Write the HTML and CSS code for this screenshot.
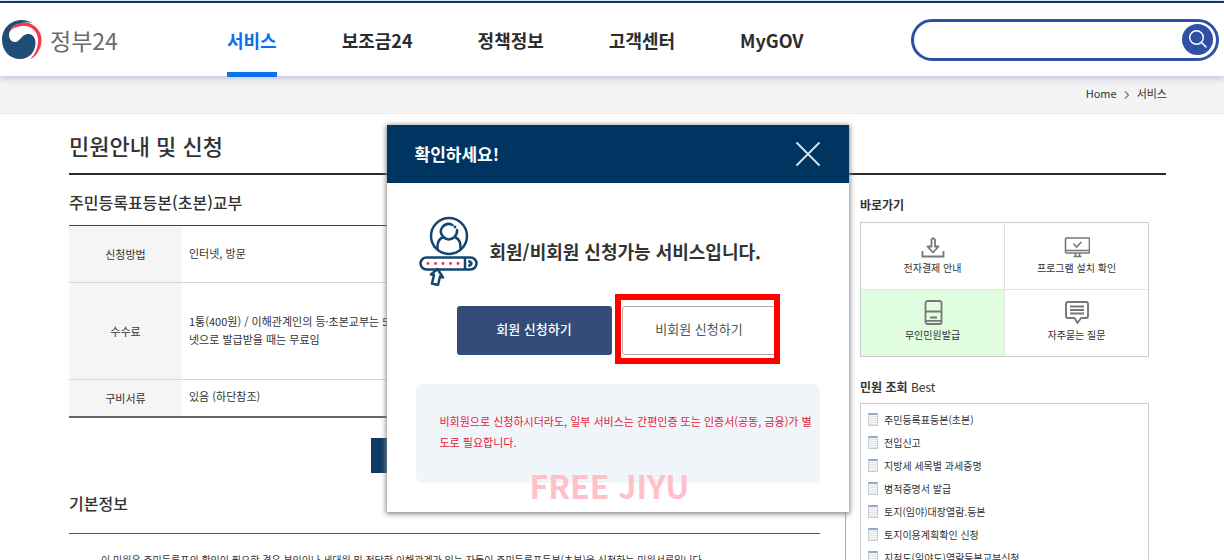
FILE: index.html
```html
<!DOCTYPE html>
<html lang="ko">
<head>
<meta charset="utf-8">
<title>정부24</title>
<meta name="viewport" content="width=device-width, initial-scale=1">
<link rel="stylesheet" href="styles.css">
</head>
<body>
<header class="header">
  <a class="logo" href="#">
    <svg class="logo-mark" viewBox="0 0 40 40" aria-hidden="true">
      <path fill="#f5384c" d="M7 13C10 5 17 2 24 2.500 33 4 39.500 11 39.500 20 39.500 29 34 36.500 28 39.500 34 33 36 27 36 20 36 12 30 6 22 6 15 6 10 8 7 13z"/>
      <path fill="#204d75" d="M30 3C27 1 23 0 20 0 8 0 0 9 0 20 0 31 8 39 18 39 27 39 33.500 32 33.500 23 33.500 17 30 13.500 25.500 14 19.500 14.500 18 22 13 22 9 22 7 18.500 7 15 7 8 14 3 22 2.500 25 2.200 27 2.300 30 3z"/>
    </svg>
    <span>정부24</span>
  </a>
  <nav class="nav">
    <a class="nav-link current" href="#">서비스</a>
    <a class="nav-link" href="#">보조금24</a>
    <a class="nav-link" href="#">정책정보</a>
    <a class="nav-link" href="#">고객센터</a>
    <a class="nav-link" href="#">MyGOV</a>
  </nav>
  <form class="search">
    <input class="search-input" type="search" aria-label="검색어">
    <button class="search-button" type="button" aria-label="검색">
      <svg viewBox="0 0 31 31" aria-hidden="true"><g fill="none" stroke="#fff" stroke-width="1.5" stroke-linecap="round"><circle cx="14.5" cy="13.5" r="6.8"/><path d="M19.5 18.5l4.5 4.5"/></g></svg>
    </button>
  </form>
</header>

<div class="breadcrumb">
  <a href="#">Home</a>
  <svg class="chevron" viewBox="0 0 6 8" aria-hidden="true"><path d="M1 .5L4.5 4 1 7.5" fill="none" stroke="#777" stroke-width="1.2"/></svg>
  <a href="#">서비스</a>
</div>

<div class="page">
  <h1 class="page-title">민원안내 및 신청</h1>
  <div class="columns">
    <main class="content">
      <h2 class="section-title">주민등록표등본(초본)교부</h2>
      <table class="info">
        <tr class="row-method"><th scope="row">신청방법</th><td>인터넷, 방문</td></tr>
        <tr class="row-fee"><th scope="row">수수료</th><td>1통(400원) / 이해관계인의 등·초본교부는 500원, 인터<br>넷으로 발급받을 때는 무료임</td></tr>
        <tr class="row-docs"><th scope="row">구비서류</th><td>있음 (하단참조)</td></tr>
      </table>
      <button class="apply" type="button" aria-label="신청하기"></button>
      <h2 class="section-title basic">기본정보</h2>
      <p class="basic-text">이 민원은 주민등록표의 확인이 필요한 경우 본인이나 세대원 및 정당한 이해관계가 있는 자들이 주민등록표등본(초본)을 신청하는 민원서류입니다.</p>
    </main>
    <aside class="side">
      <h3 class="side-title">바로가기</h3>
      <div class="shortcuts">
        <a class="shortcut" href="#">
          <svg viewBox="0 0 26 26" aria-hidden="true"><g fill="none" stroke="#777" stroke-width="1.800"><path d="M11.500 6.500q1.500-2.500 3.500 0V13.500H18.500l-5.500 6-5.500-6h4z" stroke-linejoin="round"/><path d="M2.500 18v5.500h21V18"/></g></svg>
          <span>전자결제 안내</span>
        </a>
        <a class="shortcut" href="#">
          <svg viewBox="0 0 26 26" aria-hidden="true"><g fill="none" stroke="#777" stroke-width="1.600"><rect x="1.500" y="5" width="24" height="15" rx="1"/><path d="M1.500 17.500h24M11.500 20v3M15.500 20v3M9.500 23.500h8M9.500 10.500l3 3.500 5-5"/></g></svg>
          <span>프로그램 설치 확인</span>
        </a>
        <a class="shortcut active" href="#">
          <svg viewBox="0 0 26 26" aria-hidden="true"><g fill="none" stroke="#777" stroke-width="1.800"><rect x="5.500" y="1" width="16" height="23" rx="2"/><path d="M5.500 11.500h16M10 17.500h7M5.500 20.800h16"/></g></svg>
          <span>무인민원발급</span>
        </a>
        <a class="shortcut" href="#">
          <svg viewBox="0 0 26 26" aria-hidden="true"><g fill="none" stroke="#777" stroke-width="1.900"><path d="M4 2h18q2 0 2 2v12q0 2-2 2h-5l-3.500 5-3-5H4q-2 0-2-2V4q0-2 2-2z" stroke-linejoin="round"/><path d="M6 6.500h14M6 10h14M6 13.500h14"/></g></svg>
          <span>자주묻는 질문</span>
        </a>
      </div>
      <h3 class="side-title best-title">민원 조회 <span>Best</span></h3>
      <ul class="best">
        <li><a href="#">주민등록표등본(초본)</a></li>
        <li><a href="#">전입신고</a></li>
        <li><a href="#">지방세 세목별 과세증명</a></li>
        <li><a href="#">병적증명서 발급</a></li>
        <li><a href="#">토지(임야)대장열람.등본</a></li>
        <li><a href="#">토지이용계획확인 신청</a></li>
        <li><a href="#">지적도(임야도)열람등본교부신청</a></li>
      </ul>
    </aside>
  </div>
</div>

<div class="overlay">
  <section class="modal" role="dialog" aria-labelledby="modal-title">
    <header class="modal-head">
      <h2 id="modal-title">확인하세요!</h2>
      <button class="close" type="button" aria-label="닫기">
        <svg viewBox="0 0 26 26" aria-hidden="true"><path d="M1.500 1.500l23 23M24.500 1.500l-23 23" stroke="#dfe6ee" stroke-width="1.800"/></svg>
      </button>
    </header>
    <div class="modal-body">
      <div class="message">
        <svg class="member-icon" viewBox="0 0 60 70" aria-hidden="true">
          <g fill="none" stroke="#164670" stroke-width="2.500" stroke-linecap="round" stroke-linejoin="round">
            <circle cx="30" cy="20" r="18"/>
            <path d="M18.500 33v-2q0-8 6-10M41.500 33v-2q0-8-6-10M33.500 9q-6-3-10 2t1 10q5 5 11 0 3-3 2.500-7"/>
            <path d="M7.500 41.500h44a6 6 0 0 1 0 12h-44a6 6 0 0 1 0-12zM46 42v11"/>
            <path d="M50.500 45.500q3.500 2 0 4" stroke-width="3"/>
            <path d="M18.500 53l-6.500 5.500 3 .5-2 8.500 6 1.500 2-8.500 3 1z" fill="#fff"/>
          </g>
          <circle cx="36" cy="11" r="1.400" fill="#164670"/>
          <g fill="#f02b4c"><circle cx="9" cy="47.500" r="1.400"/><circle cx="16.500" cy="47.500" r="1.400"/><circle cx="24" cy="47.500" r="1.400"/><circle cx="31.500" cy="47.500" r="1.400"/><circle cx="39" cy="47.500" r="1.400"/></g>
        </svg>
        <p>회원/비회원 신청가능 서비스입니다.</p>
      </div>
      <div class="actions">
        <button class="choice member" type="button">회원 신청하기</button>
        <div class="marked">
          <button class="choice guest" type="button">비회원 신청하기</button>
          <span class="marker"></span>
        </div>
      </div>
      <p class="notice">비회원으로 신청하시더라도, 일부 서비스는 간편인증 또는 인증서(공동, 금융)가 별도로 필요합니다.</p>
    </div>
    <span class="watermark">FREE JIYU</span>
  </section>
</div>
</body>
</html>
```

FILE: styles.css
```css
* { box-sizing: border-box; }
html { overflow: hidden; }
body {
  margin: 0;
  position: relative;
  height: 100vh;
  overflow: hidden;
  background: #fff;
  color: #333;
  font-family: "Noto Sans CJK KR", sans-serif;
  font-size: 11px;
  line-height: 18px;
}
h1, h2, h3, p, ul { margin: 0; padding: 0; }
a { color: inherit; text-decoration: none; }
button, input { font: inherit; }
button { padding: 0; border: 0; cursor: pointer; }
svg { display: block; }

/* Header */
.header {
  position: relative;
  display: flex;
  align-items: stretch;
  height: 75px;
  margin-top: 1px;
  padding-right: 5px;
  border-top: 2px solid #0b3677;
  background: #fff;
  box-shadow: 0 1px 8px 1px #b9bfd6;
}
.logo {
  display: flex;
  align-items: center;
  gap: 8px;
  width: 227px;
  padding: 0 0 0 2px;
  color: #6c6c6c;
  font-size: 23px;
}
.logo-mark { width: 40px; height: 40px; }
.nav { display: flex; flex: 1; gap: 65px; }
.nav-link {
  display: flex;
  align-items: center;
  height: 74px;
  padding-bottom: 1px;
  color: #2c2c2c;
  font-size: 18px;
  font-weight: 700;
}
.nav-link.current { color: #0a6ff0; box-shadow: inset 0 -5px #0a6ff0; }
.search {
  display: flex;
  align-items: center;
  align-self: center;
  width: 308px;
  height: 42px;
  padding-right: 3px;
  border: 3px solid #2f50a5;
  border-radius: 21px;
}
.search-input {
  flex: 1;
  min-width: 0;
  height: 30px;
  padding: 0 0 0 18px;
  border: 0;
  outline: 0;
  background: transparent;
  appearance: none;
  font-size: 14px;
}
.search-button { width: 31px; height: 31px; border-radius: 50%; background: #2f50a5; }

.breadcrumb {
  display: flex;
  justify-content: flex-end;
  align-items: center;
  gap: 7px;
  height: 38px;
  padding: 0 57px 3px 0;
  border-bottom: 1px solid #ececec;
  background: #f5f4f5;
}
.chevron { width: 6px; height: 8px; margin-top: 4px; }

/* Page */
.page { padding: 0 58px 0 69px; }
.page-title {
  height: 61px;
  padding-top: 16px;
  border-bottom: 2px solid #2b2b2b;
  font-size: 22px;
  font-weight: 500;
  line-height: 30px;
}
.columns { display: flex; gap: 25px; }
.content { flex: 1; min-width: 0; }
.section-title {
  padding: 15px 0 11px;
  font-size: 16px;
  font-weight: 500;
  line-height: 24px;
}
.info {
  width: 100%;
  border-collapse: collapse;
  border-top: 1px solid #444;
  border-bottom: 2px solid #666;
}
.info th {
  width: 113px;
  padding: 0;
  background: #f5f5f5;
  font-weight: 400;
}
.info td { padding: 0 7px 3px; }
.info tr + tr { border-top: 1px solid #d6d6d6; }
.row-method { height: 57px; }
.row-fee { height: 97px; }
.row-docs { height: 37px; }
.apply {
  display: block;
  width: 147px;
  height: 35px;
  margin: 20px auto 0;
  background: #0f3a66;
}
.section-title.basic {
  padding: 18px 0 18px;
  border-bottom: 1px solid #555;
}
.basic-text { padding: 17px 32px; white-space: nowrap; font-size: 10px; }

/* Side column */
.side {
  width: 321px;
  padding: 0 17px 0 14px;
  border-left: 1px solid #aaa;
}
.side-title { padding: 21px 0 8px; font-size: 12px; font-weight: 700; }
.best-title span { font-weight: 400; }
.shortcuts {
  display: grid;
  grid-template-columns: 1fr 1fr;
  gap: 1px;
  border: 1px solid #ccc;
  background: #e3e3e3;
}
.shortcut {
  display: flex;
  flex-direction: column;
  align-items: center;
  height: 66px;
  padding-top: 10px;
  background: #fff;
  font-size: 10px;
}
.shortcut svg { width: 26px; height: 26px; }
.shortcut.active { background: #e1fde0; }
.best {
  padding: 4px 7px;
  border: 1px solid #ccc;
  list-style: none;
  font-size: 10px;
}
.best li { display: flex; align-items: center; gap: 6px; height: 23px; }
.best li::before {
  content: "";
  width: 8px;
  height: 10px;
  border: 1px solid #c9cdd3;
  border-top: 2px solid #8faac8;
  background: repeating-linear-gradient(#f8f8f8 0 1px, #e2e4e8 1px 2px);
}
.best-title { padding: 21px 0 7px; }

/* Dialog */
.overlay {
  position: absolute;
  inset: 0;
  display: flex;
  justify-content: center;
  align-items: flex-start;
  padding: 125px 0 0 11px;
}
.modal {
  position: relative;
  width: 462px;
  background: #fff;
  box-shadow: 0 1px 5px 1px #888;
}
.modal-head {
  display: flex;
  justify-content: space-between;
  align-items: center;
  height: 58px;
  padding: 0 28px;
  background: #003561;
  color: #fff;
}
.modal-head h2 { font-size: 17px; font-weight: 700; }
.close { width: 26px; height: 26px; background: transparent; }
.modal-body { padding: 33px 29px 29px; }
.message { display: flex; align-items: center; gap: 11px; padding-left: 3px; }
.member-icon { flex: none; width: 60px; height: 70px; }
.message p { font-size: 18px; font-weight: 700; line-height: 26px; }
.actions { display: flex; gap: 10px; margin: 20px 0 29px 41px; }
.choice {
  display: block;
  width: 155px;
  height: 49px;
  padding-bottom: 4px;
  border-radius: 3px;
  font-size: 13px;
}
.member { background: #344c79; color: #fff; font-weight: 500; }
.guest { border: 1px solid #aaa; background: #fff; color: #555; }
.marked { position: relative; }
.marker {
  position: absolute;
  inset: -12px -3px -9px -7px;
  border: 6px solid #fd0000;
  pointer-events: none;
}
.notice {
  min-height: 99px;
  padding: 27px 0 27px 24px;
  border-radius: 6px;
  background: #f0f5f9;
  color: #e4193d;
  line-height: 21px;
}
.watermark {
  position: absolute;
  left: 143px;
  bottom: 4px;
  color: #ffc0c9;
  font-size: 32px;
  font-weight: 700;
  line-height: 46px;
}
```
